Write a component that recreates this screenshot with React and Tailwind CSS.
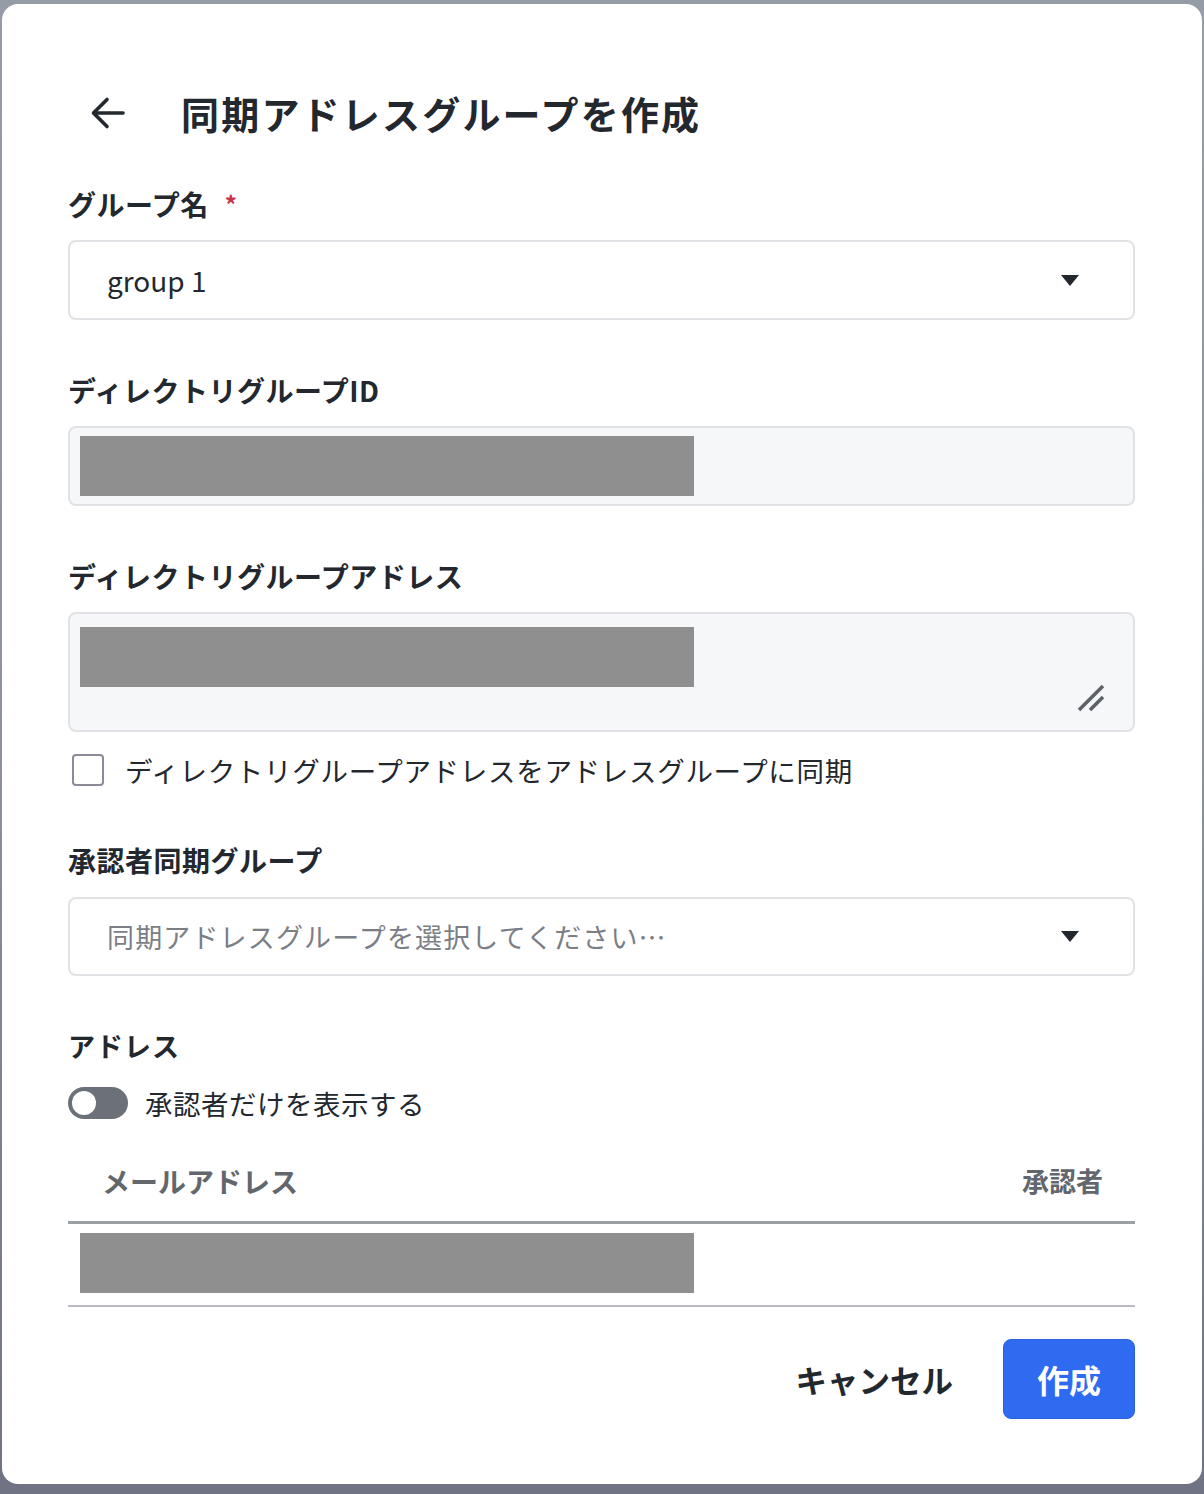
export default function App() {
  const font = { fontFamily: '"Noto Sans CJK JP", "Noto Sans", sans-serif' };
  return (
    <div
      className="w-[1204px] h-[1494px] pt-[4px] px-[2px] bg-gradient-to-b from-[#959ca8] via-[#8c919d] to-[#6f7383] overflow-hidden"
      style={font}
    >
      <div className="h-[1480px] bg-white rounded-[16px] pl-[66px] pr-[67px] pt-[79px] text-[#23272e]">
        {/* Title */}
        <div className="h-[60px] flex items-center">
          <div className="w-[113px] flex items-center pl-[22px]">
            <svg width="36" height="36" viewBox="0 0 36 36" fill="none" stroke="#23272e" strokeWidth="3.6" strokeLinecap="round" strokeLinejoin="round">
              <path d="M33 18H4" />
              <path d="M17 4.5L3.5 18L17 31.5" />
            </svg>
          </div>
          <h1 className="text-[38px] font-bold leading-[60px] tracking-[2.2px]">同期アドレスグループを作成</h1>
        </div>

        {/* Group name */}
        <div className="mt-[41px] h-[40px] flex items-center text-[28px] font-bold leading-[40px] tracking-[0.5px]">
          <span>グループ名</span>
          <span className="ml-[16px] text-[#c8334a] text-[24px]">*</span>
        </div>
        <div className="mt-[16px] h-[80px] rounded-[8px] border-2 border-[#e1e2e5] flex items-center justify-between pl-[37px] pr-[54px]">
          <span className="text-[28px] leading-[40px]">group 1</span>
          <svg width="18" height="11" viewBox="0 0 18 11"><path d="M0 0H18L9 11Z" fill="#23272e" /></svg>
        </div>

        {/* Directory group ID */}
        <div className="mt-[50px] h-[40px] text-[28px] font-bold leading-[40px] tracking-[0.5px]">ディレクトリグループID</div>
        <div className="mt-[16px] h-[80px] rounded-[8px] border-2 border-[#e1e2e5] bg-[#f6f7f9] pl-[10px] pt-[8px]">
          <div className="w-[614px] h-[60px] bg-[#8f8f8f]" />
        </div>

        {/* Directory group address */}
        <div className="mt-[50px] h-[40px] text-[28px] font-bold leading-[40px] tracking-[0.5px]">ディレクトリグループアドレス</div>
        <div className="mt-[16px] h-[120px] rounded-[8px] border-2 border-[#e1e2e5] bg-[#f6f7f9] pl-[10px] pt-[13px] pr-[28px] flex flex-col">
          <div className="w-[614px] h-[60px] bg-[#8f8f8f]" />
          <div className="flex justify-end mt-[-3px]">
            <svg width="28" height="28" viewBox="0 0 28 28" stroke="#5d6168" strokeWidth="3.5" strokeLinecap="butt">
              <path d="M2 26L26 2" />
              <path d="M13 26L26 13" />
            </svg>
          </div>
        </div>

        {/* Checkbox */}
        <div className="mt-[18px] h-[40px] flex items-center">
          <div className="ml-[4px] w-[32px] h-[32px] rounded-[4px] border-2 border-[#8b8a96] bg-white" />
          <span className="ml-[21px] text-[27.5px] leading-[40px] tracking-[0.7px]">ディレクトリグループアドレスをアドレスグループに同期</span>
        </div>

        {/* Approver sync group */}
        <div className="mt-[50px] h-[40px] text-[28px] font-bold leading-[40px] tracking-[0.5px]">承認者同期グループ</div>
        <div className="mt-[17px] h-[79px] rounded-[8px] border-2 border-[#e1e2e5] flex items-center justify-between pl-[37px] pr-[54px]">
          <span className="text-[27px] leading-[40px] text-[#7b7e85] tracking-[1.15px]">同期アドレスグループを選択してください…</span>
          <svg width="18" height="11" viewBox="0 0 18 11"><path d="M0 0H18L9 11Z" fill="#23272e" /></svg>
        </div>

        {/* Address */}
        <div className="mt-[50px] h-[40px] text-[27px] font-bold leading-[40px] tracking-[1px]">アドレス</div>
        <div className="mt-[17px] h-[40px] flex items-center">
          <div className="relative w-[60px] h-[32px] rounded-full bg-[#6c7079]">
            <div className="absolute left-[4px] top-[4px] w-[24px] h-[24px] rounded-full bg-white" />
          </div>
          <span className="ml-[17px] text-[27.5px] leading-[40px] tracking-[0.5px]">承認者だけを表示する</span>
        </div>

        {/* Table */}
        <div className="mt-[18px] h-[83px] flex items-center justify-between pl-[34px] pr-[32px] border-b-[3px] border-[#9ba0a6]">
          <span className="text-[28px] font-bold text-[#62666d] leading-[40px]">メールアドレス</span>
          <span className="text-[27px] font-bold text-[#62666d] leading-[40px]">承認者</span>
        </div>
        <div className="h-[83px] border-b-2 border-[#b9bcc4] pl-[12px] pt-[9px]">
          <div className="w-[614px] h-[60px] bg-[#8f8f8f]" />
        </div>

        {/* Buttons */}
        <div className="mt-[32px] flex items-center justify-end">
          <button className="text-[31.5px] font-bold leading-[40px] tracking-[0px] mr-[50px]">キャンセル</button>
          <button className="w-[132px] h-[80px] rounded-[8px] bg-[#2e6bf1] text-white text-[32px] font-bold leading-[40px] border border-[#2a62dc]">作成</button>
        </div>
      </div>
    </div>
  );
}
